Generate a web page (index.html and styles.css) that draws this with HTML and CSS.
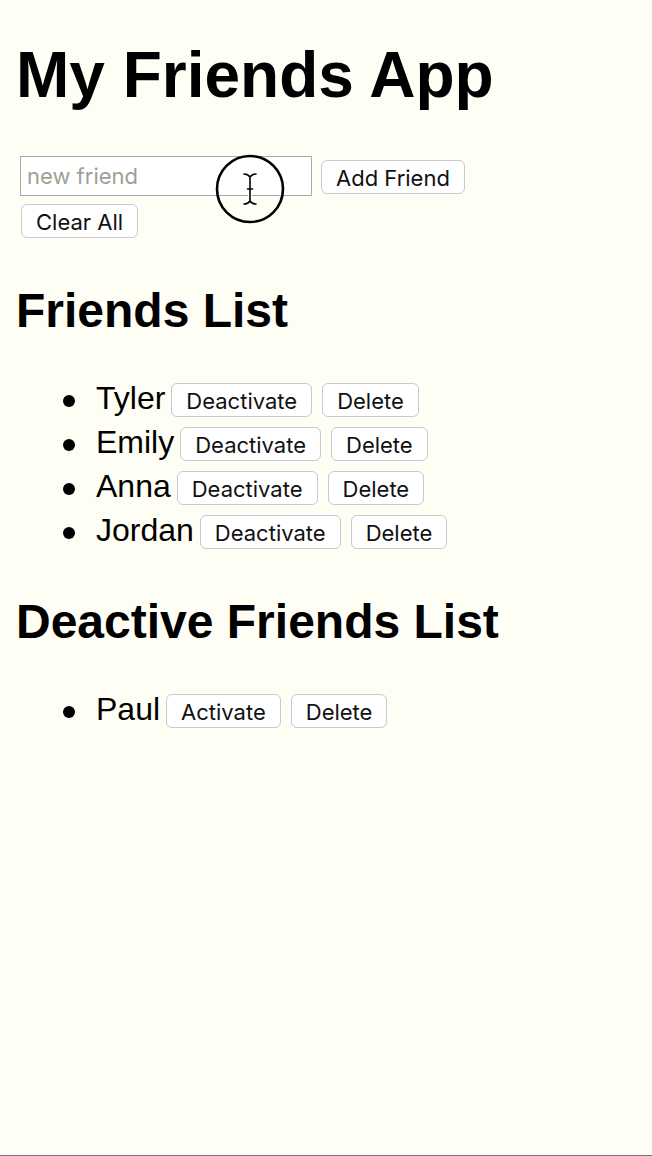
FILE: index.html
```html
<!DOCTYPE html>
<html lang="en">
<head>
<meta charset="utf-8">
<title>My Friends App</title>
<link rel="stylesheet" href="styles.css">
</head>
<body>
<div class="app">
  <h1 class="title">My Friends App</h1>
  <div class="form">
    <div class="form-row">
      <input class="field" type="text" placeholder="new friend">
      <button class="btn btn-add">Add Friend</button>
    </div>
    <div class="form-row">
      <button class="btn btn-clear">Clear All</button>
    </div>
  </div>
  <h2 class="section">Friends List</h2>
  <ul class="friends">
    <li class="friend"><span class="name">Tyler</span><button class="btn">Deactivate</button><button class="btn">Delete</button></li>
    <li class="friend"><span class="name">Emily</span><button class="btn">Deactivate</button><button class="btn">Delete</button></li>
    <li class="friend"><span class="name">Anna</span><button class="btn">Deactivate</button><button class="btn">Delete</button></li>
    <li class="friend"><span class="name">Jordan</span><button class="btn">Deactivate</button><button class="btn">Delete</button></li>
  </ul>
  <h2 class="section">Deactive Friends List</h2>
  <ul class="friends">
    <li class="friend"><span class="name">Paul</span><button class="btn">Activate</button><button class="btn">Delete</button></li>
  </ul>
</div>
<div class="cursor-ring">
  <svg width="70" height="70" viewBox="0 0 70 70">
    <circle cx="35" cy="35" r="33" fill="none" stroke="#000" stroke-width="2.6"/>
    <g fill="none" stroke-linecap="round">
      <path d="M29 20 Q33 20 35 23 Q37 20 41 20 M35 23 L35 47 M29 50 Q33 50 35 47 Q37 50 41 50 M32.5 35 L37.5 35" stroke="#fff" stroke-width="3.6"/>
      <path d="M29 20 Q33 20 35 23 Q37 20 41 20 M35 23 L35 47 M29 50 Q33 50 35 47 Q37 50 41 50 M32.5 35 L37.5 35" stroke="#000" stroke-width="1.6"/>
    </g>
  </svg>
</div>
</body>
</html>
```

FILE: styles.css
```css
html {
  background: #fefef5;
}

body {
  margin: 0;
  min-height: 100vh;
  box-sizing: border-box;
  border-bottom: 1px solid #74748a;
  font-family: "Liberation Sans", Arial, Helvetica, sans-serif;
  color: #000;
  position: relative;
}

.app {
  padding: 0 16px;
  display: flow-root;
}

.title {
  font-size: 64px;
  line-height: 74px;
  font-weight: bold;
  margin: 38px 0 44px;
}

.form {
  margin-bottom: 45px;
}

.form-row {
  display: flex;
  align-items: center;
  gap: 9px;
  padding-left: 4px;
}

.form-row + .form-row {
  margin-top: 8px;
}

.field {
  width: 292px;
  height: 40px;
  box-sizing: border-box;
  margin: 0;
  padding: 0 6px;
  border: 1px solid #a9a9ad;
  border-radius: 0;
  background: #fff;
  font-family: Inter, "Noto Sans", sans-serif;
  font-size: 22px;
  color: #111;
}

.field::placeholder {
  color: #a0a095;
}

.btn {
  display: inline-block;
  vertical-align: baseline;
  margin: 0 0 0 6px;
  padding: 6px 14px 4px;
  border: 1px solid #c9c9cf;
  border-radius: 6px;
  background: #fff;
  font-family: Inter, "Noto Sans", sans-serif;
  font-size: 22px;
  line-height: 22px;
  color: #111;
}

.btn + .btn {
  margin-left: 10px;
}

.form-row .btn {
  margin: 0;
}

.form-row .btn-add {
  margin-top: 2px;
}

.form-row .btn-clear {
  margin-left: 1px;
}

.section {
  font-size: 48px;
  line-height: 56px;
  font-weight: bold;
  margin: 42px 0 0;
}

.friends {
  margin: 37px 0 0;
  padding: 0 0 0 80px;
  list-style: none;
}

.friend {
  font-size: 32px;
  line-height: 44px;
  height: 44px;
}

.friend::before {
  content: "";
  display: inline-block;
  width: 12.5px;
  height: 12.5px;
  border-radius: 50%;
  background: #000;
  margin-left: -33.5px;
  margin-right: 21px;
  vertical-align: 2px;
}

.name {
  font-size: 32px;
}

.cursor-ring {
  position: absolute;
  left: 215px;
  top: 154px;
  width: 70px;
  height: 70px;
  pointer-events: none;
}
```
